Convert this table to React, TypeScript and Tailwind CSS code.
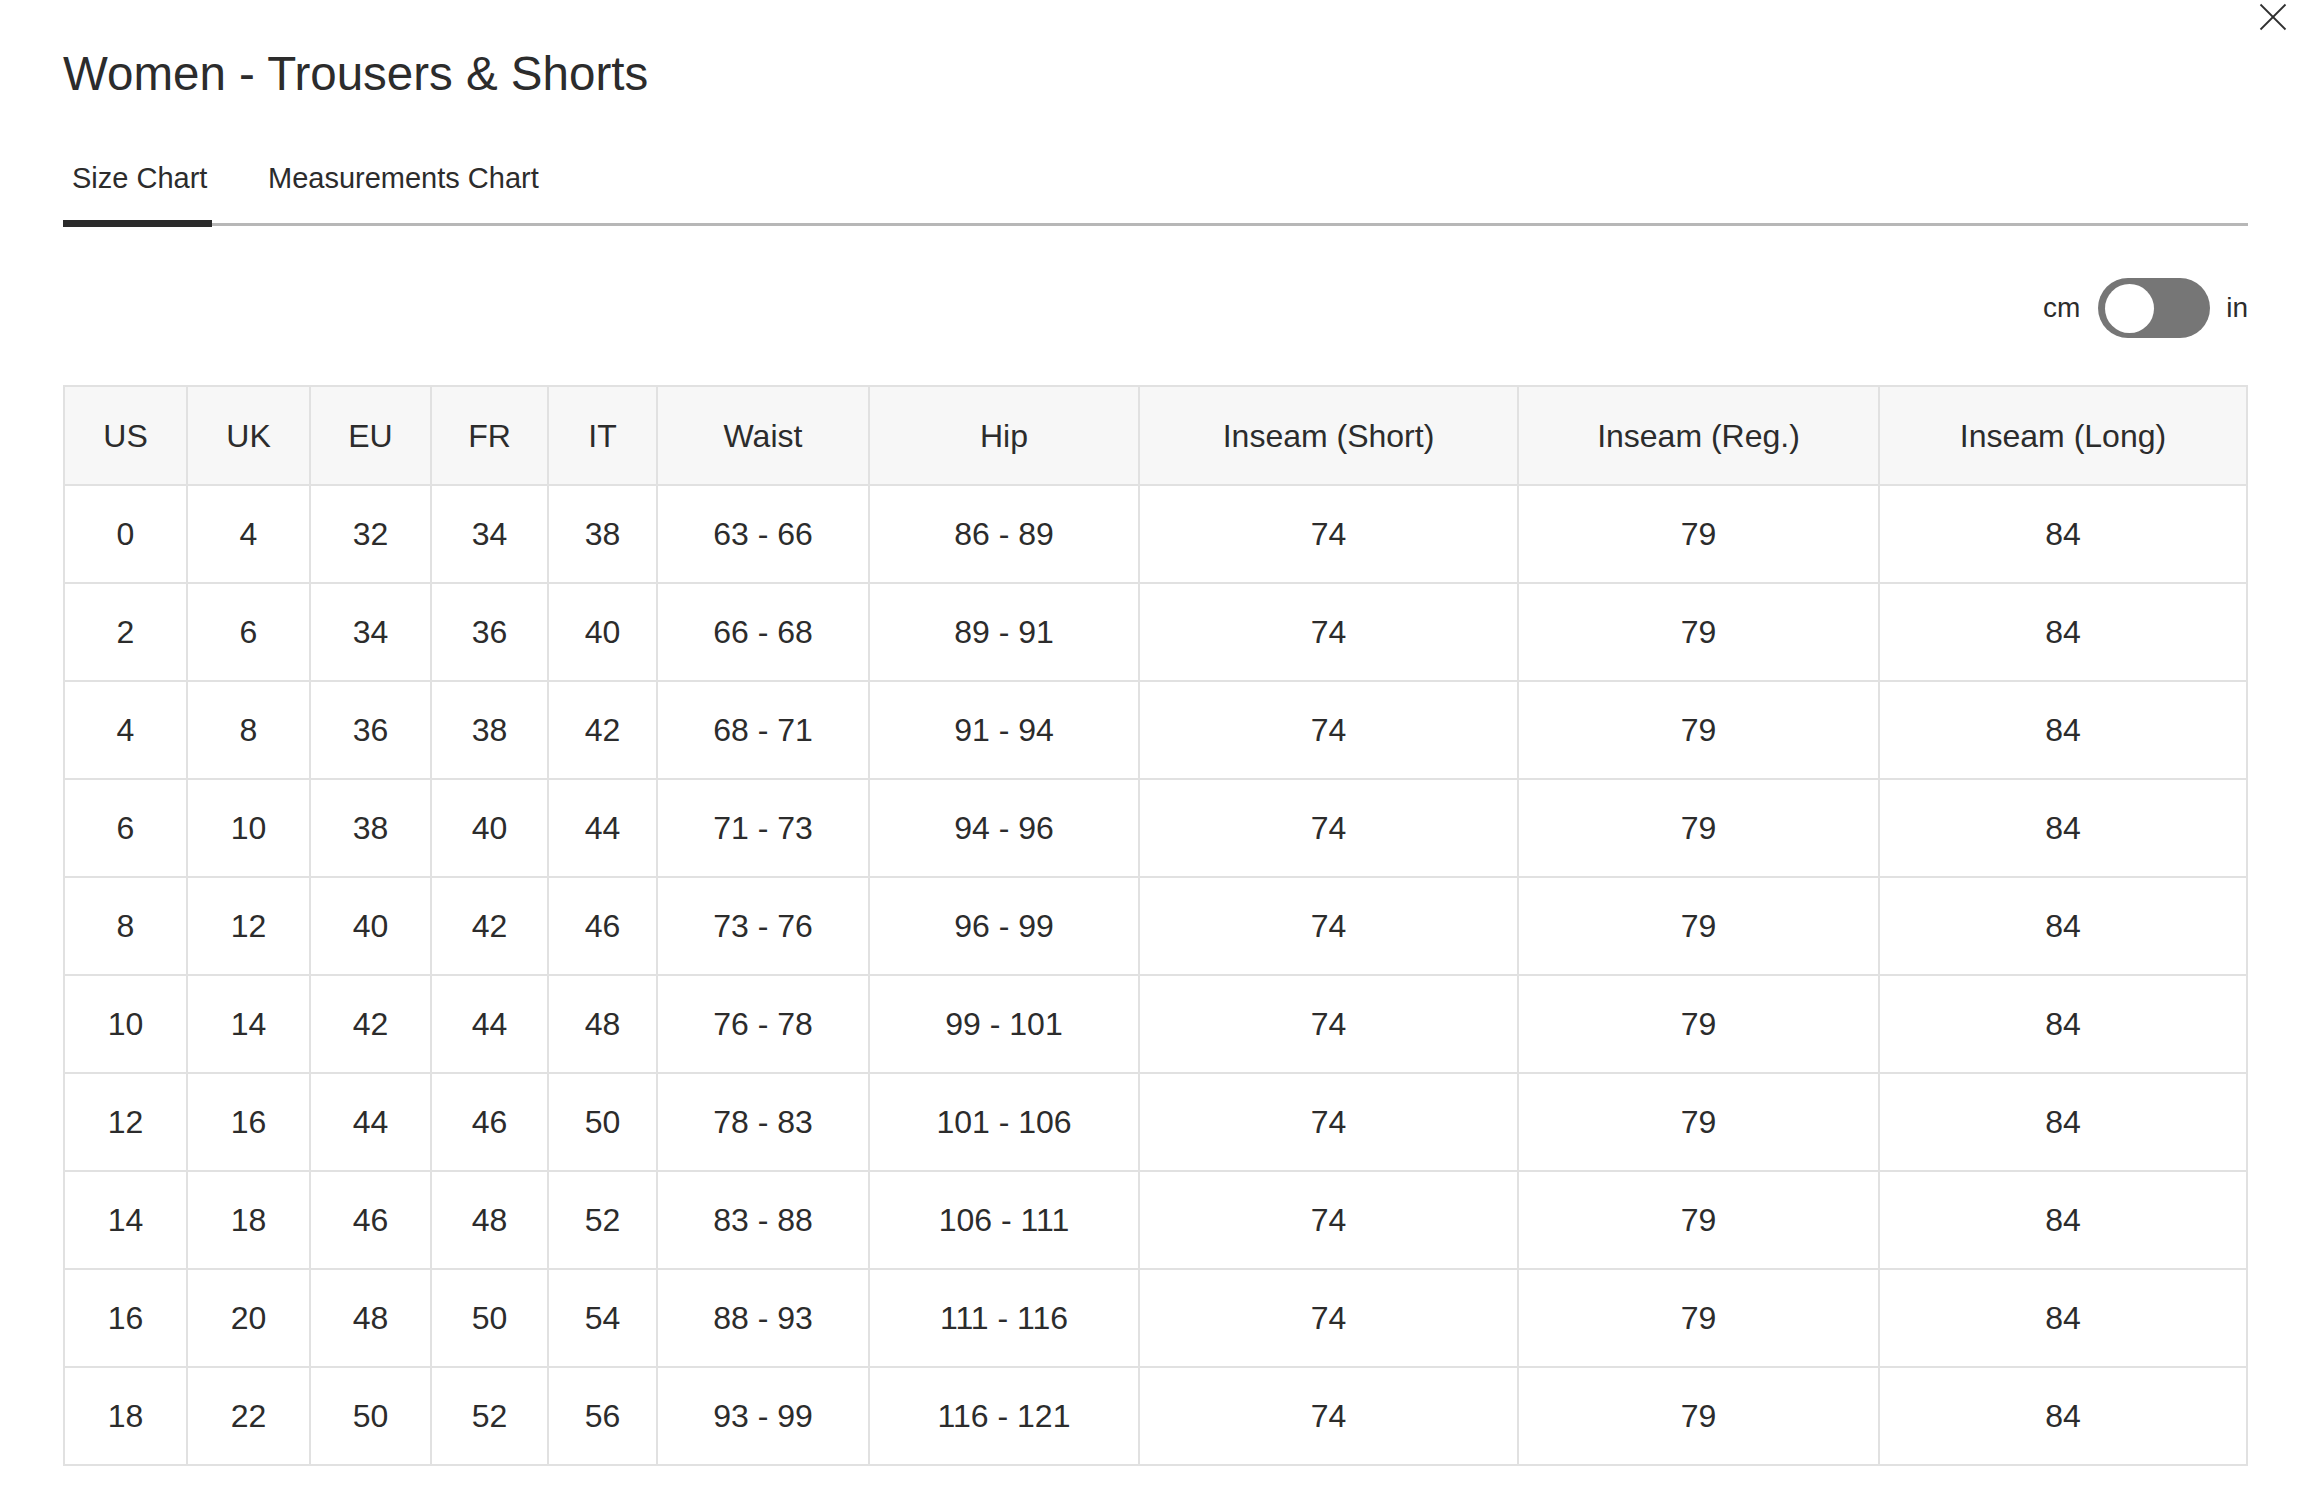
const COLUMNS = [
	{ label: "US", w: "w-[123px]" },
	{ label: "UK", w: "w-[123px]" },
	{ label: "EU", w: "w-[121px]" },
	{ label: "FR", w: "w-[117px]" },
	{ label: "IT", w: "w-[109px]" },
	{ label: "Waist", w: "w-[212px]" },
	{ label: "Hip", w: "w-[270px]" },
	{ label: "Inseam (Short)", w: "w-[379px]" },
	{ label: "Inseam (Reg.)", w: "w-[361px]" },
	{ label: "Inseam (Long)", w: "" },
];

const ROWS = [
	["0", "4", "32", "34", "38", "63 - 66", "86 - 89"],
	["2", "6", "34", "36", "40", "66 - 68", "89 - 91"],
	["4", "8", "36", "38", "42", "68 - 71", "91 - 94"],
	["6", "10", "38", "40", "44", "71 - 73", "94 - 96"],
	["8", "12", "40", "42", "46", "73 - 76", "96 - 99"],
	["10", "14", "42", "44", "48", "76 - 78", "99 - 101"],
	["12", "16", "44", "46", "50", "78 - 83", "101 - 106"],
	["14", "18", "46", "48", "52", "83 - 88", "106 - 111"],
	["16", "20", "48", "50", "54", "88 - 93", "111 - 116"],
	["18", "22", "50", "52", "56", "93 - 99", "116 - 121"],
];

export default function App() {
	return (
		<div className="relative min-h-screen bg-white pl-[63px] pr-[52px] text-[#2c2c2c] font-['Liberation_Sans',Arial,sans-serif]">
			{/* Close */}
			<button className="absolute top-[3px] right-[13px] w-[28px] h-[28px]">
				<svg viewBox="0 0 28 28" className="w-[28px] h-[28px]" fill="none" stroke="#2f2f2f" strokeWidth="1.8">
					<line x1="1.5" y1="1.5" x2="26.5" y2="26.5" />
					<line x1="26.5" y1="1.5" x2="1.5" y2="26.5" />
				</svg>
			</button>

			{/* Title */}
			<h1 className="pt-[50px] text-[47.5px] leading-[48px] font-normal">
				Women - Trousers &amp; Shorts
			</h1>

			{/* Tabs */}
			<div className="mt-[66px] flex border-b-[3px] border-[#b7b7b7]">
				<div className="w-[149px] pl-[9px] pb-[28px] border-b-[7px] border-[#2b2b2b] -mb-[4px] text-[29px] leading-[28px]">
					Size Chart
				</div>
				<div className="ml-[47px] px-[9px] pb-[28px] border-b-[7px] border-transparent -mb-[4px] text-[29px] leading-[28px]">
					Measurements Chart
				</div>
			</div>

			{/* Unit toggle */}
			<div className="mt-[52px] flex items-center justify-end text-[28px] leading-none">
				<span>cm</span>
				<div className="ml-[18px] mr-[16px] flex items-center w-[112px] h-[60px] rounded-full bg-[#767676] pl-[7px]">
					<div className="w-[49px] h-[49px] rounded-full bg-white" />
				</div>
				<span>in</span>
			</div>

			{/* Table */}
			<table className="mt-[47px] w-full table-fixed border-collapse border-2 border-[#e1e1e1] text-[32px] text-center">
				<thead>
					<tr className="h-[99px] bg-[#f7f7f7]">
						{COLUMNS.map((col) => (
							<th key={col.label} className={`${col.w} border-2 border-[#e1e1e1] font-normal`}>
								{col.label}
							</th>
						))}
					</tr>
				</thead>
				<tbody>
					{ROWS.map((row) => (
						<tr key={row[0]} className="h-[98px]">
							{[...row, "74", "79", "84"].map((cell, i) => (
								<td key={i} className="border-2 border-[#e1e1e1]">
									{cell}
								</td>
							))}
						</tr>
					))}
				</tbody>
			</table>
		</div>
	);
}
